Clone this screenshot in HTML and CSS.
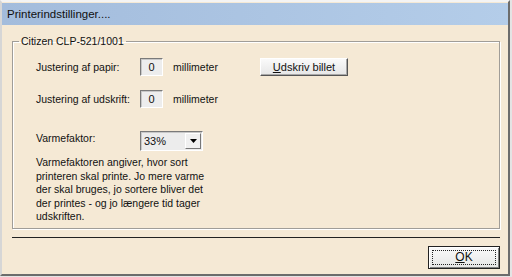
FILE: index.html
```html
<!DOCTYPE html>
<html lang="da">
<head>
    <meta charset="UTF-8">
    <meta name="viewport" content="width=device-width, initial-scale=1">
    <title>Printerindstillinger</title>
    <link rel="stylesheet" href="styles.css">
</head>
<body>
    <div class="window">
        <div class="titlebar">Printerindstillinger....</div>

        <!-- Printer group -->
        <fieldset class="group">
            <legend>Citizen CLP-521/1001</legend>
            <div class="group-body">
                <div class="row">
                    <span class="field-label">Justering af papir:</span>
                    <span class="numbox">0</span>
                    <span class="unit">millimeter</span>
                    <button type="button" class="btn btn-print"><u>U</u>dskriv billet</button>
                </div>
                <div class="row row-second">
                    <span class="field-label">Justering af udskrift:</span>
                    <span class="numbox">0</span>
                    <span class="unit">millimeter</span>
                </div>
                <div class="row row-heat">
                    <span class="field-label">Varmefaktor:</span>
                    <div class="combo">
                        <span class="combo-value">33%</span>
                        <span class="combo-arrow">
                            <svg width="7" height="4" viewBox="0 0 7 4"><path d="M0 0H7L3.5 4Z" fill="#000"/></svg>
                        </span>
                    </div>
                </div>
                <p class="hint">Varmefaktoren angiver, hvor sort<br>printeren skal printe. Jo mere varme<br>der skal bruges, jo sortere bliver det<br>der printes - og jo længere tid tager<br>udskriften.</p>
            </div>
        </fieldset>

        <div class="separator"></div>

        <div class="actions">
            <button type="button" class="btn btn-ok"><span class="focus-rect"><u>O</u>K</span></button>
        </div>
    </div>
</body>
</html>
```

FILE: styles.css
```css
body {
    margin: 0;
    background-color: #e4e4e4;
    font-family: "Liberation Sans", Arial, sans-serif;
    font-size: 10.5px;
    color: #111;
}
.window {
    box-sizing: border-box;
    width: 510px;
    height: 276px;
    background-color: #f5e9d5; /* beige dialog face */
    border-top: 2px solid #f4f4f4;
    border-left: 2px solid #d6d6d6;
    border-right: 2px solid #6c6c6c;
    border-bottom: 2px solid #6c6c6c;
}
.titlebar {
    height: 22px;
    margin-top: 1px;
    padding-left: 5px;
    line-height: 22px;
    font-size: 11.5px;
    color: #101010;
    background: linear-gradient(to right, #a3bcdc, #b4cde9);
}
.group {
    margin: 9px 8px 0 10px;
    padding: 0;
    border: 1px solid #a09d98;
    box-shadow: inset 1px 1px 0 #fff, 1px 1px 0 #fff;
}
.group legend {
    margin-left: 6px;
    padding: 0 2px;
    line-height: 14px;
}
.group-body {
    padding: 10px 0 4px 23px;
}
.row {
    display: flex;
    align-items: center;
}
.row-second {
    margin-top: 14px;
}
.row-heat {
    margin-top: 23px;
    align-items: flex-start;
}
.field-label {
    width: 104px;
    line-height: 14px;
}
.numbox {
    box-sizing: border-box;
    width: 23px;
    height: 18px;
    line-height: 17px;
    text-align: center;
    font-size: 11px;
    background-color: #ededed;
    border-top: 1px solid #7a7a7a;
    border-left: 1px solid #7a7a7a;
    border-right: 1px solid #fff;
    border-bottom: 1px solid #fff;
    box-shadow: inset 1px 1px 0 #c8c8c8;
}
.unit {
    width: 87px;
    margin-left: 10px;
}
.btn {
    box-sizing: border-box;
    font-family: inherit;
    font-size: 11px;
    color: #111;
    padding: 0;
    background: linear-gradient(#fafafa, #e6e6e6);
    border-top: 1px solid #fff;
    border-left: 1px solid #fff;
    border-right: 1px solid #555;
    border-bottom: 1px solid #555;
    box-shadow: inset -1px -1px 0 #a8a8a8;
}
.btn-print {
    width: 88px;
    height: 18px;
}
.combo {
    box-sizing: border-box;
    display: flex;
    align-items: center;
    width: 63px;
    height: 20px;
    background-color: #ececec;
    border-top: 1px solid #7a7a7a;
    border-left: 1px solid #7a7a7a;
    border-right: 1px solid #fff;
    border-bottom: 1px solid #fff;
    box-shadow: inset 1px 1px 0 #c8c8c8;
}
.combo-value {
    flex: 1;
    padding-left: 3px;
    font-size: 11px;
}
.combo-arrow {
    box-sizing: border-box;
    display: flex;
    align-items: center;
    justify-content: center;
    width: 16px;
    height: 16px;
    margin-right: 1px;
    background-color: #f0f0f0;
    border-top: 1px solid #fff;
    border-left: 1px solid #fff;
    border-right: 1px solid #777;
    border-bottom: 1px solid #777;
}
.hint {
    margin: 5px 0 0;
    line-height: 13.5px;
}
.separator {
    margin: 8px 8px 0 10px;
    border-top: 1px solid #222;
}
.actions {
    display: flex;
    justify-content: flex-end;
    margin: 8px 8px 0 0;
}
.btn-ok {
    width: 72px;
    height: 23px;
    border: 1px solid #222;
    box-shadow: inset 1px 1px 0 #fff, inset -1px -1px 0 #808080;
    padding: 3px;
}
.focus-rect {
    display: block;
    height: 100%;
    box-sizing: border-box;
    border: 1px dotted #222;
    line-height: 13px;
    font-size: 12px;
}
```
